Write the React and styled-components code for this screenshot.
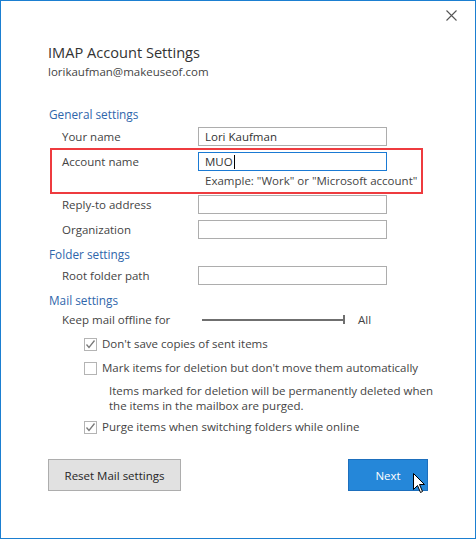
import React from "react";
import styled, { createGlobalStyle } from "styled-components";

const GlobalStyle = createGlobalStyle`
  html, body {
    margin: 0;
    padding: 0;
    background: #ffffff;
  }
  body {
    font-family: "Open Sans", "Noto Sans", sans-serif;
    -webkit-font-smoothing: antialiased;
  }
`;

const Window = styled.div`
  position: relative;
  box-sizing: border-box;
  width: 476px;
  height: 539px;
  border: 1px solid #1b7fd1;
  background: #ffffff;
  padding: 9px 47px 0 47px;
  display: flex;
  flex-direction: column;
  color: #444444;
  font-size: 11.5px;
`;

const TopBar = styled.div`
  display: flex;
  justify-content: flex-end;
  margin-right: -29px;
  height: 11px;
`;

const CloseButton = styled.button`
  border: none;
  background: transparent;
  padding: 0;
  width: 11px;
  height: 11px;
  display: flex;
  cursor: pointer;
`;

const Title = styled.h1`
  margin: 21px 0 0;
  font-size: 14.6px;
  line-height: 20px;
  font-weight: 400;
  color: #333333;
`;

const Email = styled.div`
  margin-top: 2px;
  line-height: 16px;
  color: #444444;
`;

const Heading = styled.div`
  margin-top: ${(p) => p.$top}px;
  margin-left: 1px;
  line-height: 16px;
  font-size: 11.8px;
  color: #2f66ab;
`;

const Field = styled.div`
  display: grid;
  grid-template-columns: 136px 189px;
  align-items: center;
  margin-top: ${(p) => p.$top || 0}px;
  margin-left: 14px;
`;

const Label = styled.span`
  line-height: 16px;
  white-space: nowrap;
`;

const TextBox = styled.div`
  box-sizing: border-box;
  height: 19px;
  border: 1px solid ${(p) => (p.$focus ? "#1a7ad4" : "#adadad")};
  padding: 0 6px;
  line-height: 17px;
  color: #333333;
  display: flex;
  align-items: center;
`;

const Caret = styled.span`
  display: inline-block;
  width: 1px;
  height: 14px;
  background: #000000;
  margin-left: 1px;
`;

const Highlight = styled.div`
  margin: 2px 0 0 2px;
  width: 373px;
  box-sizing: border-box;
  border: 2px solid #ee3b3f;
  padding: 2px 0 3px 10px;
  & > ${Field} {
    margin-left: 0;
  }
`;

const Hint = styled.div`
  margin-top: 2px;
  padding-left: 143px;
  line-height: 16px;
  white-space: nowrap;
`;

const SliderRow = styled.div`
  margin: 4px 0 0 14px;
  display: flex;
  align-items: center;
  line-height: 16px;
`;

const SliderLabel = styled.span`
  flex: 0 0 140px;
  white-space: nowrap;
`;

const Track = styled.div`
  position: relative;
  flex: 0 0 143px;
  height: 2px;
  background: #6f6f6f;
  margin-right: 13px;
  &::after {
    content: "";
    position: absolute;
    right: 0;
    top: -4px;
    width: 2px;
    height: 9px;
    background: #6f6f6f;
  }
`;

const Check = styled.div`
  margin: ${(p) => p.$top}px 0 0 36px;
  display: flex;
  align-items: center;
  gap: 5px;
  line-height: 16px;
  white-space: nowrap;
`;

const Box = styled.span`
  box-sizing: border-box;
  width: 13px;
  height: 13px;
  border: 1px solid #b4b4b4;
  background: #ffffff;
  display: flex;
  align-items: center;
  justify-content: center;
`;

const Note = styled.div`
  margin: 7px 0 0 61px;
  line-height: 15px;
  width: 336px;
`;

const Buttons = styled.div`
  margin-top: 24px;
  display: flex;
  justify-content: space-between;
  position: relative;
`;

const Button = styled.button`
  box-sizing: border-box;
  height: 32px;
  width: ${(p) => (p.$primary ? 80 : 133)}px;
  border: 1px solid ${(p) => (p.$primary ? "#1d6fbd" : "#adadad")};
  background: ${(p) => (p.$primary ? "#2587d9" : "#e1e1e1")};
  color: ${(p) => (p.$primary ? "#ffffff" : "#262626")};
  font-family: inherit;
  font-size: 11.5px;
  padding: 0;
  cursor: pointer;
`;

const Pointer = styled.svg`
  position: absolute;
  left: 365px;
  top: 14px;
`;

const Checkmark = () => (
  <svg width="11" height="11" viewBox="0 0 11 11">
    <path d="M1.5 5.5 L4 8.5 L9.5 1.5" fill="none" stroke="#7a7a7a" strokeWidth="1.3" />
  </svg>
);

const CheckRow = ({ top, checked, children }) => (
  <Check $top={top}>
    <Box>{checked && <Checkmark />}</Box>
    <span>{children}</span>
  </Check>
);

export default function App() {
  return (
    <>
      <GlobalStyle />
      <Window>
        <TopBar>
          <CloseButton aria-label="Close">
            <svg width="11" height="11" viewBox="0 0 11 11">
              <path d="M0.5 0.5 L10.5 10.5 M10.5 0.5 L0.5 10.5" stroke="#555555" strokeWidth="1.1" />
            </svg>
          </CloseButton>
        </TopBar>

        <Title>IMAP Account Settings</Title>
        <Email>lorikaufman@makeuseof.com</Email>

        <Heading $top={26}>General settings</Heading>
        <Field $top={5}>
          <Label>Your name</Label>
          <TextBox>Lori Kaufman</TextBox>
        </Field>
        <Highlight>
          <Field>
            <Label>Account name</Label>
            <TextBox $focus>
              MUO
              <Caret />
            </TextBox>
          </Field>
          <Hint>Example: "Work" or "Microsoft account"</Hint>
        </Highlight>
        <Field $top={1}>
          <Label>Reply-to address</Label>
          <TextBox />
        </Field>
        <Field $top={6}>
          <Label>Organization</Label>
          <TextBox />
        </Field>

        <Heading $top={7}>Folder settings</Heading>
        <Field $top={4}>
          <Label>Root folder path</Label>
          <TextBox />
        </Field>

        <Heading $top={7}>Mail settings</Heading>
        <SliderRow>
          <SliderLabel>Keep mail offline for</SliderLabel>
          <Track />
          <span>All</span>
        </SliderRow>
        <CheckRow top={8} checked>
          Don't save copies of sent items
        </CheckRow>
        <CheckRow top={8}>
          Mark items for deletion but don't move them automatically
        </CheckRow>
        <Note>
          Items marked for deletion will be permanently deleted when the items in
          the mailbox are purged.
        </Note>
        <CheckRow top={6} checked>
          Purge items when switching folders while online
        </CheckRow>

        <Buttons>
          <Button>Reset Mail settings</Button>
          <Button $primary>Next</Button>
          <Pointer width="13" height="21" viewBox="0 0 13 21">
            <path
              d="M0.5 0.5 L0.5 16.5 L4.5 12.5 L7.5 19.5 L9.5 18.5 L6.5 11.5 L11.5 11.5 Z"
              fill="#ffffff"
              stroke="#000000"
              strokeWidth="1"
            />
          </Pointer>
        </Buttons>
      </Window>
    </>
  );
}
